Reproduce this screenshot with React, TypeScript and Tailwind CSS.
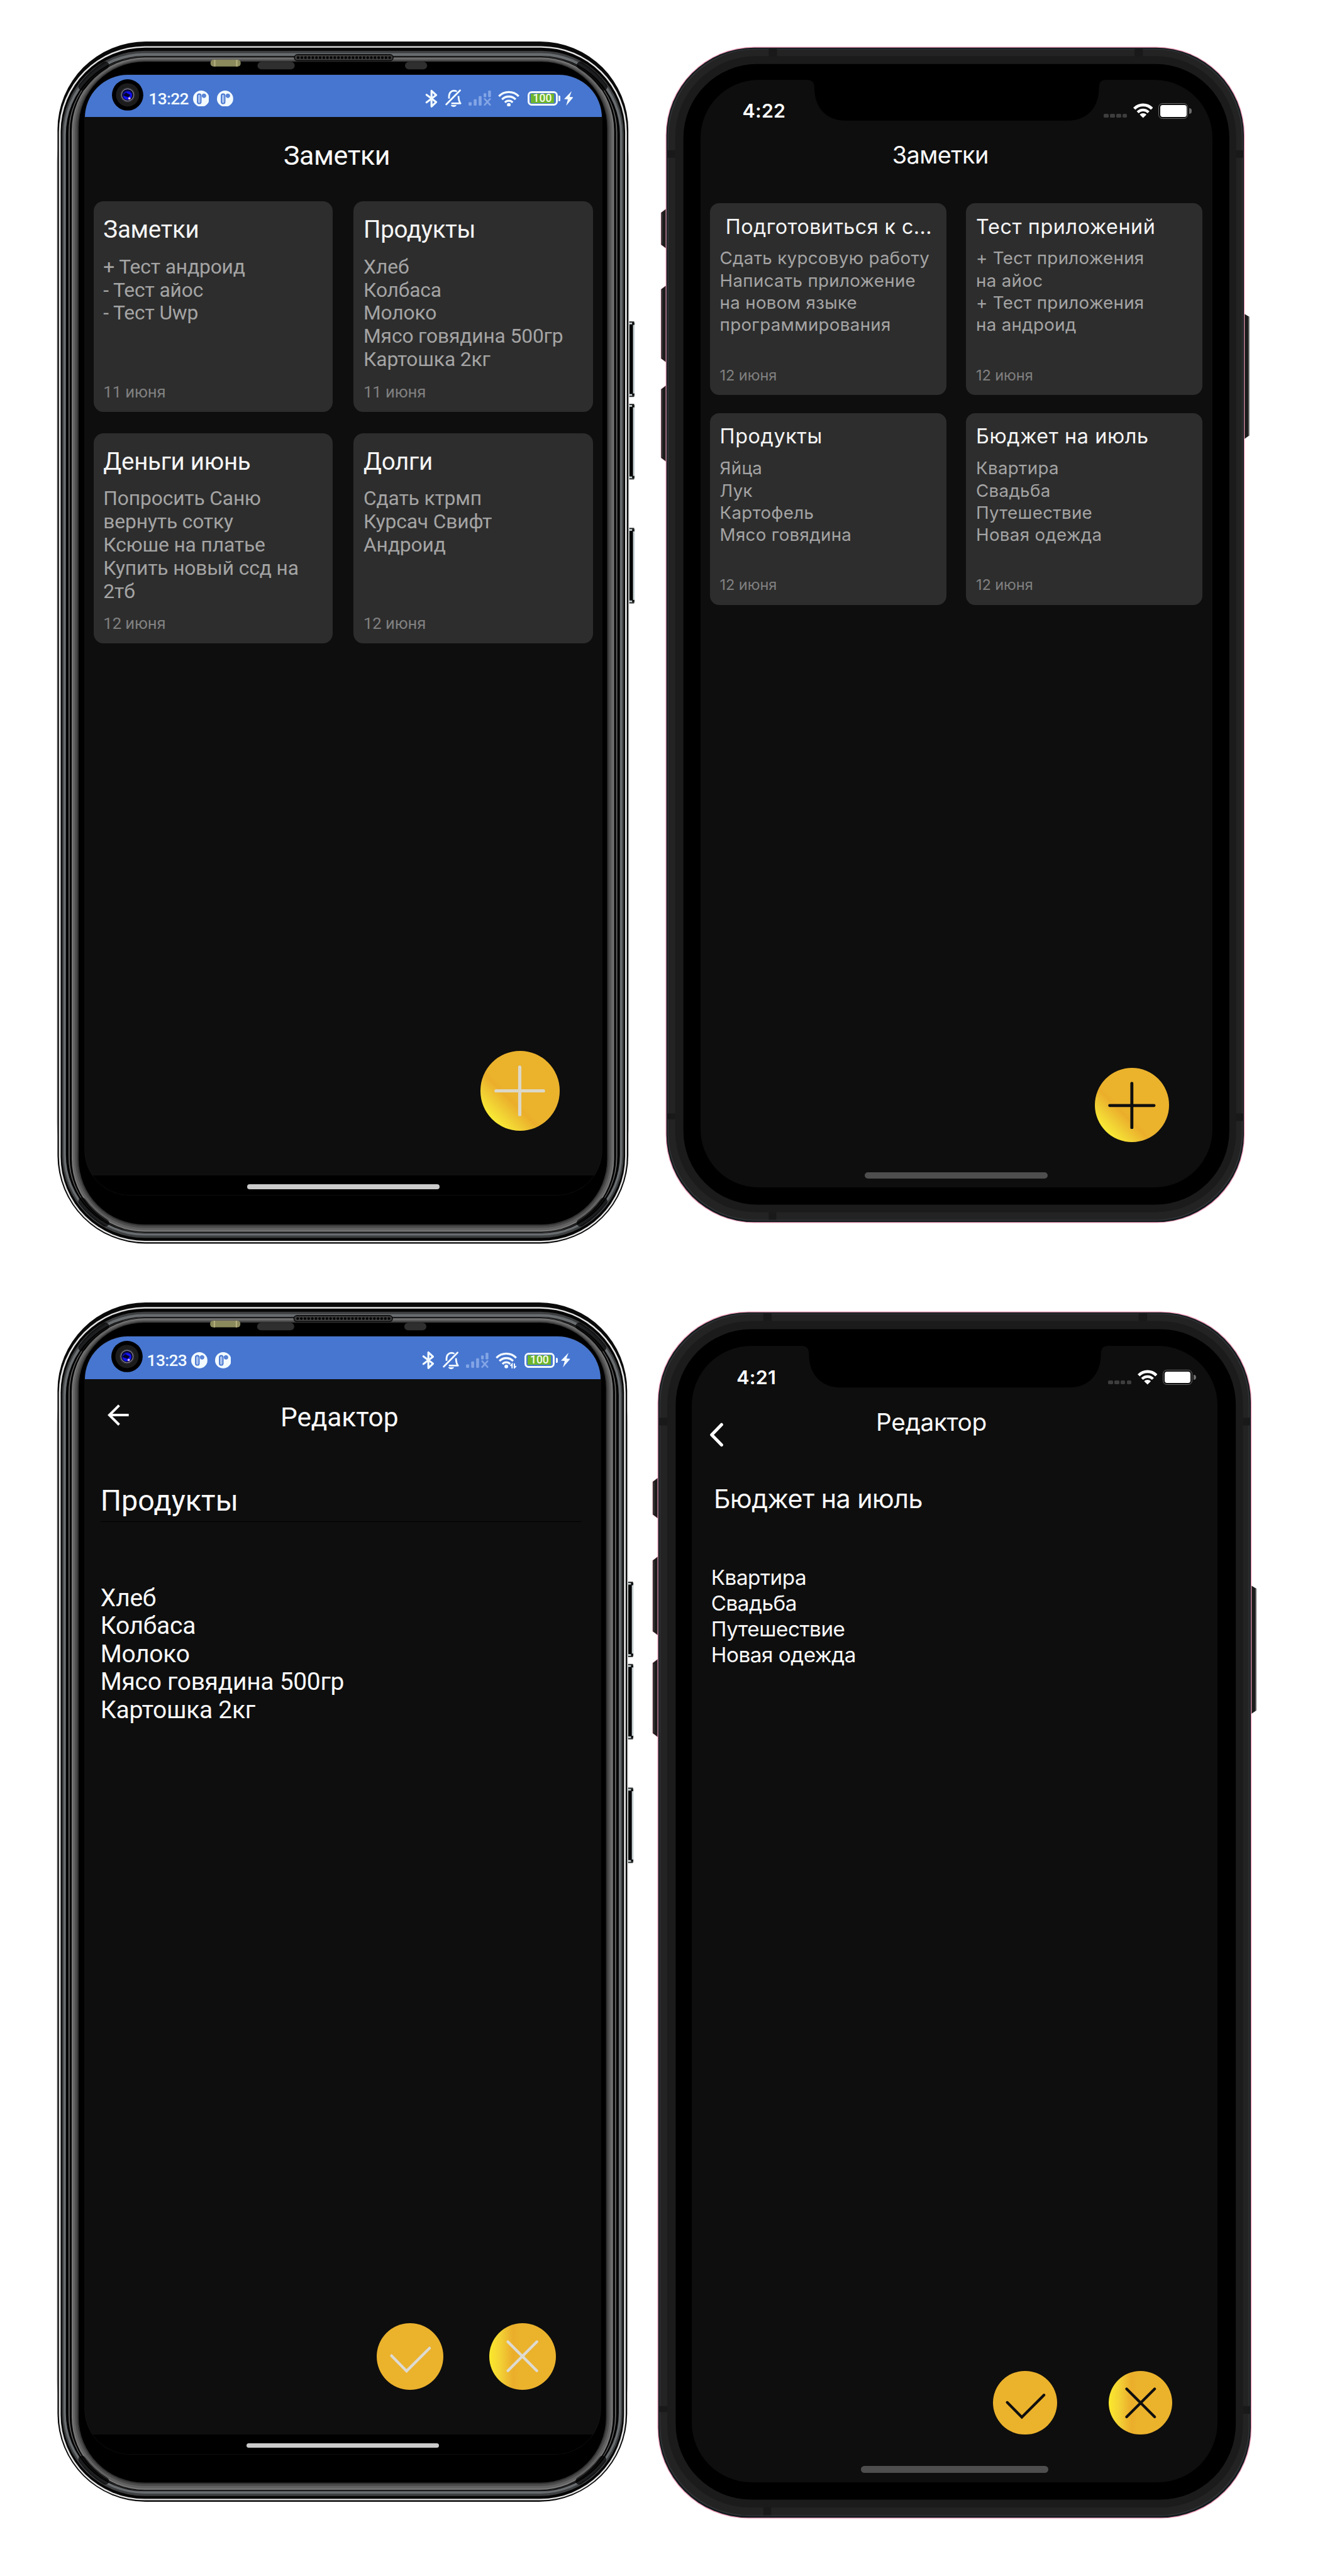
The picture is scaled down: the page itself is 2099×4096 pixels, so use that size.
import React from "react";

type Note = { title: string; lines: string[]; date: string; indent?: boolean };

const androidNotes: Note[] = [
  { title: "Заметки", lines: ["+ Тест андроид", "- Тест айос", "- Тест Uwp"], date: "11 июня" },
  { title: "Продукты", lines: ["Хлеб", "Колбаса", "Молоко", "Мясо говядина 500гр", "Картошка 2кг"], date: "11 июня" },
  { title: "Деньги июнь", lines: ["Попросить Саню", "вернуть сотку", "Ксюше на платье", "Купить новый ссд на", "2тб"], date: "12 июня" },
  { title: "Долги", lines: ["Сдать ктрмп", "Курсач Свифт", "Андроид"], date: "12 июня" },
];

const iosNotes: Note[] = [
  { title: "Подготовиться к с...", lines: ["Сдать курсовую работу", "Написать приложение", "на новом языке", "программирования"], date: "12 июня", indent: true },
  { title: "Тест приложений", lines: ["+ Тест приложения", "на айос", "+ Тест приложения", "на андроид"], date: "12 июня" },
  { title: "Продукты", lines: ["Яйца", "Лук", "Картофель", "Мясо говядина"], date: "12 июня" },
  { title: "Бюджет на июль", lines: ["Квартира", "Свадьба", "Путешествие", "Новая одежда"], date: "12 июня" },
];

/* ---------- device frames ---------- */

const androidLayers: [number, number, number, number, number, string][] = [
  [0, 60, 986, 2010, 150, "#d2d2d2"],
  [1.5, 0, 984.5, 2070, 152, "#0a0a0a"],
  [4, 8, 982, 2067.5, 148, "#e6e6e6"],
  [7, 10.5, 979, 2065, 145, "#050505"],
  [9.5, 16, 976.5, 2060, 142, "#3d3f40"],
  [12, 20, 974, 2056, 139, "#686c6f"],
  [16, 25, 970, 2052, 135, "#030303"],
  [20.5, 26, 965.5, 2051, 131, "#666666"],
  [22.5, 26.5, 963.5, 2050.5, 129, "#040404"],
  [26, 27.5, 960, 2049.5, 126, "#777777"],
  [28.5, 29.5, 957.5, 2047, 123, "#626262"],
  [32, 31.5, 954, 2043, 120, "#4c4c4c"],
  [35.5, 33.5, 950.5, 2039.5, 116, "#333333"],
  [38, 35, 948, 2037, 113, "#000000"],
];

function AndroidFrame() {
  const dots = Array.from({ length: 26 }, (_, i) => 415 + i * 6.3);
  return (
    <svg className="absolute inset-0 h-full w-full overflow-visible" viewBox="0 0 986 2070" preserveAspectRatio="none">
      {[482, 624, 837.5].map((y) => (
        <g key={y}>
          <rect x="984" y={y} width="11.5" height="130" rx="2.5" fill="#c9d3d5" />
          <rect x="986.5" y={y + 5} width="6" height="120" fill="#000" />
          <rect x="986" y={y} width="8.5" height="2" fill="#222" />
          <rect x="991" y={y + 2} width="4" height="4" fill="#111" />
          <rect x="986" y={y + 128} width="8.5" height="2" fill="#222" />
          <rect x="991" y={y + 124} width="4" height="4" fill="#111" />
        </g>
      ))}
      {androidLayers.map(([x1, y1, x2, y2, r, fill], i) => (
        <rect key={i} x={x1} y={y1} width={x2 - x1} height={y2 - y1} rx={r} fill={fill} />
      ))}
      {/* shaded corners of the metal rim */}
      <g fill="none" stroke="#000" strokeOpacity="0.72" strokeWidth="13" strokeLinecap="round">
        <path d="M44 78 A142 142 0 0 1 84 41" />
        <path d="M902 41 A142 142 0 0 1 942 78" />
        <path d="M44 1997 A142 142 0 0 0 84 2034" />
        <path d="M902 2034 A142 142 0 0 0 942 1997" />
      </g>
      <rect x="265" y="31.5" width="52" height="11.5" rx="5" fill="#8b8a5c" />
      <rect x="271" y="31.5" width="2.5" height="11.5" fill="#b3ad7c" />
      <rect x="309" y="31.5" width="2.5" height="11.5" fill="#b3ad7c" />
      <rect x="346" y="35" width="64" height="13" rx="6.5" fill="#2f2f2f" />
      <rect x="600" y="35" width="38" height="13" rx="6.5" fill="#2f2f2f" />
      <rect x="409.5" y="22.5" width="170" height="10.5" rx="5.2" fill="#3c3c3c" stroke="#050505" strokeWidth="1.5" />
      {dots.map((x) => (
        <circle key={x} cx={x + 1} cy="27.8" r="2.3" fill="#000" />
      ))}
    </svg>
  );
}

function IosFrame() {
  return (
    <svg className="absolute inset-0 h-full w-full overflow-visible" viewBox="0 0 996 2024" preserveAspectRatio="none">
      {[[278, 347], [410, 543], [582, 714]].map(([a, b]) => (
        <g key={a}>
          <path d={`M2 ${a - 1} L-8.5 ${a + 7} V${b - 7} L2 ${b + 1}Z`} fill="#1c1c1c" stroke="#e0708f" strokeOpacity="0.5" strokeWidth="1" />
          <path d={`M-6.5 ${a + 8} V${b - 8}`} stroke="#333" strokeWidth="2" />
        </g>
      ))}
      <path d="M994 458 L1004 464 V669 L994 676Z" fill="#1c1c1c" />
      <path d="M1003.5 464 V669" stroke="#5a5a5a" strokeWidth="2" />
      <rect x="-0.5" y="-0.5" width="997" height="2025" rx="152" fill="#f29ab5" />
      <rect x="0.8" y="0.8" width="994.4" height="2022.4" rx="151" fill="#101a1e" />
      <rect x="2.6" y="2.6" width="990.8" height="2018" rx="150" fill="#313334" />
      <rect x="4.5" y="4" width="987" height="2015" rx="149" fill="#232323" />
      <rect x="16" y="15.5" width="966" height="1990.5" rx="139" fill="#1b1b1b" />
      <g fill="#191919">
        <rect x="177" y="3" width="14" height="12.5" />
        <rect x="807" y="3" width="14" height="12.5" />
        <rect x="177" y="2006" width="13" height="13" />
        <rect x="3" y="177.5" width="13" height="13" />
        <rect x="982" y="177.5" width="11" height="13" />
        <rect x="3" y="1836" width="13" height="10" />
        <rect x="982" y="1836" width="11" height="13" />
      </g>
      <rect x="30" y="29" width="940" height="1964" rx="127" fill="#000" />
    </svg>
  );
}

function Notch() {
  return (
    <svg className="h-[70px] w-[516px] shrink-0" viewBox="0 0 516 70" preserveAspectRatio="none">
      <path d="M0 0 C9 0 13 4 13 14 C13 48 34 70 66 70 H450 C482 70 503 48 503 14 C503 4 507 0 516 0Z" fill="#000" />
    </svg>
  );
}

/* ---------- status bar pieces ---------- */

function Camera() {
  return (
    <svg className="mt-[8px] h-[54px] w-[54px] shrink-0 self-start" viewBox="0 0 54 54">
      <defs>
        <radialGradient id="lens" cx="0.55" cy="0.6" r="0.6">
          <stop offset="0" stopColor="#1414c8" />
          <stop offset="0.6" stopColor="#1212ff" />
          <stop offset="1" stopColor="#05051e" />
        </radialGradient>
      </defs>
      <circle cx="27" cy="27" r="27" fill="#000" />
      <circle cx="27" cy="27" r="20" fill="#1c1c1c" />
      <circle cx="27" cy="27" r="13" fill="#2a2a2e" />
      <circle cx="27" cy="27" r="10.5" fill="#050510" stroke="#77748a" strokeWidth="1.5" />
      <circle cx="26.5" cy="27" r="8.6" fill="url(#lens)" />
      <path d="M19 28 l5 -5 l8 4 l-4 4Z" fill="#03032a" />
      <circle cx="30" cy="33" r="2" fill="#d9b8ff" />
    </svg>
  );
}

function AppBadge() {
  return (
    <svg className="h-[28px] w-[28px] shrink-0" viewBox="0 0 28 28">
      <circle cx="14" cy="14" r="14" fill="#f2faff" />
      <rect x="7.6" y="6" width="6" height="16.4" rx="3" fill="#a9c2ee" stroke="#4776d0" strokeWidth="2" />
      <circle cx="18.8" cy="9" r="3.3" fill="#5b86d8" stroke="#4776d0" strokeWidth="1" />
    </svg>
  );
}

function AndroidStatus({ time, tall, traffic }: { time: string; tall?: boolean; traffic?: boolean }) {
  return (
    <div className={(tall ? "h-[74px] pr-[52px] pl-[46px]" : "h-[72px] pr-[49px] pl-[47px]") + " flex shrink-0 items-center bg-[#4776d0] text-[#f2faff]"}>
      <Camera />
      <div className={(tall ? "ml-[7px]" : "ml-[9px]") + " mt-[11px] w-[76px] text-[28.5px] leading-[34px] font-medium tracking-[-0.7px]"}>{time}</div>
      <div className={(tall ? "gap-[13px]" : "gap-[13.5px]") + " mt-[9px] flex"}>
        <AppBadge />
        <AppBadge />
      </div>
      <div className="mt-[9px] ml-auto flex items-center">
        <svg className="h-[32px] w-[22px]" viewBox="0 0 22 32" fill="none" stroke="currentColor" strokeWidth="3.4" strokeLinejoin="round" strokeLinecap="round">
          <path d="M2.5 9.5 L19 22 L11 29.5 V2.5 L19 10 L2.5 22.5" />
        </svg>
        <svg className="ml-[13px] h-[31px] w-[28px]" viewBox="0 0 28 31" fill="none" stroke="currentColor" strokeWidth="3">
          <path d="M1.8 26 L25.5 1.8" strokeLinecap="round" />
          <path d="M6.5 16 V12.5 C6.5 5.5 11 2.5 15 2.3 C17 2.3 18.5 2.6 20 3.8" />
          <path d="M22.8 11.5 C23 18 23.5 21 26.2 24.2 H10.5" strokeLinejoin="round" />
          <path d="M9.5 27.2 H19.5 C18.5 29.6 17 30.4 14.5 30.4 C12 30.4 10.5 29.6 9.5 27.2Z" fill="currentColor" stroke="none" />
        </svg>
        <svg className="ml-[12px] h-[26px] w-[39px]" viewBox="0 0 39 26" fill="#83a5e5">
          <rect x="0" y="20" width="5.5" height="6" rx="1.5" />
          <rect x="9" y="15" width="5" height="11" rx="1.5" />
          <rect x="17.5" y="9.5" width="5" height="16.5" rx="1.5" />
          <rect x="26" y="4.5" width="4.6" height="7" rx="1.5" />
          <rect x="33.8" y="0" width="4.8" height="11.5" rx="1.5" />
          <path d="M28 14.5 L37 24.5 M37 14.5 L28 24.5" stroke="#83a5e5" strokeWidth="3" strokeLinecap="round" />
        </svg>
        <svg className="ml-[12px] h-[28px] w-[37px]" viewBox="0 0 37 28" fill="none" stroke="currentColor" strokeWidth="3.6">
          <path d="M1.5 10 C10.5 0.2 26.5 0.2 35.5 10" />
          <path d="M6.8 15.4 C13 8.6 24 8.6 30.2 15.4" />
          <path d="M11.8 20.4 C15.3 16.4 21.7 16.4 25.2 20.4" />
          <circle cx="18.5" cy="24.6" r="3.2" fill="currentColor" stroke="none" />
          {traffic && <path d="M28.5 28 V20.5 L25.5 23.5 M32.5 19.5 V27 L35.5 24" strokeWidth="2.2" />}
        </svg>
        <div className="ml-[13px] flex h-[25.5px] w-[52px] items-center justify-center rounded-[7px] border-[3.5px] border-[#f2faff] p-[2px]">
          <div className="flex h-[16.5px] w-[40px] items-center justify-center bg-[#6db52c] text-[19px] leading-[16px] font-medium text-[#f4fbe8]">100</div>
        </div>
        <div className="ml-[2px] h-[9px] w-[3px] rounded-r-[2px] bg-[#f2faff]" />
        <svg className="ml-[6px] h-[25px] w-[16px]" viewBox="0 0 16 25" fill="currentColor">
          <path d="M13 0 L0 13.5 L6.5 14.2 L3.5 25 L16 10.5 L9.5 9.8Z" />
        </svg>
      </div>
    </div>
  );
}

function IosStatus({ time, large }: { time: string; large?: boolean }) {
  return (
    <div className={(large ? "pt-[34px] pr-[37.5px] pl-[77px]" : "pt-[33px] pr-[35.5px] pl-[72.5px]") + " flex shrink-0 items-center text-white"}>
      <div className="text-[33px] leading-[40px] font-semibold tracking-[0.2px]">{time}</div>
      <div className="ml-auto flex items-center">
        <div className="mt-[17px] flex gap-[2.7px]">
          {[0, 1, 2, 3].map((i) => (
            <div key={i} className="h-[7px] w-[8px] rounded-[2px] bg-[#3d3d3d]" />
          ))}
        </div>
        <svg className="ml-[10px] h-[26px] w-[34px]" viewBox="0 0 34 26" fill="none" stroke="#fff" strokeWidth="5">
          <path d="M1.8 9.6 C10 1 24 1 32.2 9.6" />
          <path d="M7.6 15.8 C13 10.4 21 10.4 26.4 15.8" strokeWidth="4.6" />
          <path d="M17 25.5 L11.2 19.8 C14.4 16.6 19.6 16.6 22.8 19.8Z" fill="#fff" stroke="none" />
        </svg>
        <div className="ml-[10px] flex h-[26.5px] w-[51px] rounded-[7px] border-2 border-[#6c6c6c] p-[2px]">
          <div className="flex-1 rounded-[4px] bg-white" />
        </div>
        <div className="ml-[2px] h-[9px] w-[4px] rounded-r-full bg-[#6c6c6c]" />
      </div>
    </div>
  );
}

/* ---------- round action buttons ---------- */

function AddButton({ className }: { className: string }) {
  return (
    <button className={className + " flex items-center justify-center rounded-full bg-[linear-gradient(45deg,#f9ec35_14%,#f0cb33_27%,#ebae2b_38%,#ebb22c_42%)]"}>
      <svg className="h-[64%] w-[64%]" viewBox="0 0 88 88" fill="none" stroke="currentColor" strokeWidth="5.6" strokeLinecap="round">
        <path d="M44 3 V85 M3 44 H85" />
      </svg>
    </button>
  );
}

function ConfirmButton({ className }: { className: string }) {
  return (
    <button className={className + " flex items-center justify-center rounded-full bg-[#ebb22c]"}>
      <svg className="h-full w-full" viewBox="0 0 114 114" fill="none" stroke="currentColor" strokeWidth="4.8" strokeLinecap="round">
        <path d="M25.5 56 L51.5 82.5 L91 43" />
      </svg>
    </button>
  );
}

function CancelButton({ className }: { className: string }) {
  return (
    <button className={className + " flex items-center justify-center rounded-full bg-[linear-gradient(90deg,#fbe92c_0%,#f3d135_17%,#ecb32d_32%,#ebae2b_36%,#ebb22c_45%)]"}>
      <svg className="h-full w-full" viewBox="0 0 114 114" fill="none" stroke="currentColor" strokeWidth="4.8" strokeLinecap="round">
        <path d="M32 32 L82 82 M82 32 L32 82" />
      </svg>
    </button>
  );
}

/* ---------- phones ---------- */

function AndroidNav() {
  return (
    <div className="flex h-[34px] shrink-0 justify-center bg-black pt-[15px]">
      <div className="h-[8.5px] w-[331px] rounded-full bg-[#cbcbcb]" />
    </div>
  );
}

function AndroidHome() {
  return (
    <section className="relative mt-[71px] ml-[97px] h-[2070px] w-[986px] font-[Roboto,sans-serif]">
      <AndroidFrame />
      <div className="relative mt-[58px] ml-[49px] flex h-[1929px] w-[890px] flex-col overflow-hidden rounded-t-[74px] rounded-b-[77px] bg-[#0e0e0e] shadow-[0_0_0_0.6px_#1a1a1a]">
        <AndroidStatus time="13:22" />
        <h1 className="mt-[39px] pr-[22px] text-center text-[46.5px] leading-[56px] tracking-[-0.4px] text-[#fafafa]">Заметки</h1>
        <div className="mt-[51px] grid grid-cols-2 gap-x-[36px] gap-y-[37px] px-[15px]">
          {androidNotes.map((n) => (
            <article key={n.title} className="flex h-[362px] flex-col rounded-[17px] bg-[#2d2d2d] pt-[25px] pb-[18px] pl-[17px] whitespace-nowrap">
              <h2 className="text-[41.7px] leading-[48px] tracking-[-0.3px] text-[#f5f5f5]">{n.title}</h2>
              <div className="mt-[20.5px] text-[34.4px] leading-[39.9px] tracking-[-0.15px] text-[#a4a4a4]">
                {n.lines.map((l) => (
                  <p key={l}>{l}</p>
                ))}
              </div>
              <div className="mt-auto text-[27.8px] leading-[32px] tracking-[-0.1px] text-[#808080]">{n.date}</div>
            </article>
          ))}
        </div>
        <div className="mt-auto flex justify-end pr-[72px] pb-[77px]">
          <AddButton className="h-[137px] w-[137px] text-[#dcd8c8]" />
        </div>
        <AndroidNav />
      </div>
    </section>
  );
}

function AndroidEditor() {
  return (
    <section className="relative mt-[42.7px] ml-[97px] h-[2065px] w-[984px] font-[Roboto,sans-serif]">
      <AndroidFrame />
      <div className="relative mt-[58px] ml-[49px] flex h-[1925px] w-[888px] flex-col overflow-hidden rounded-t-[74px] rounded-b-[77px] bg-[#0e0e0e] shadow-[0_0_0_0.6px_#1a1a1a]">
        <AndroidStatus time="13:23" tall traffic />
        <header className="mt-[37.5px] flex h-[56px] pr-[87px] pl-[39px]">
          <svg className="mt-[6px] h-[37px] w-[37px]" viewBox="0 0 37 37" fill="none" stroke="#fafafa" strokeWidth="4.4">
            <path d="M36.5 18.5 H3.5 M20 1.8 L3.2 18.5 L20 35.2" />
          </svg>
          <h1 className="flex-1 text-center text-[46px] leading-[56px] tracking-[-0.15px] text-[#fafafa]">Редактор</h1>
        </header>
        <div className="mt-[86px] mr-[32px] ml-[27px] border-b-2 border-black pb-[5px] text-[50.6px] leading-[60px] tracking-[0.05px] text-[#fafafa]">Продукты</div>
        <div className="mt-[107.5px] ml-[27px] text-[42.2px] leading-[48.1px] tracking-[-0.3px] text-[#fafafa]">
          {androidNotes[1].lines.map((l) => (
            <p key={l}>{l}</p>
          ))}
        </div>
        <div className="mt-auto flex justify-end gap-[80px] pr-[77px] pb-[77px]">
          <ConfirmButton className="h-[114px] w-[114px] text-[#dedbd2]" />
          <CancelButton className="h-[114px] w-[114px] text-[#dedbd2]" />
        </div>
        <AndroidNav />
      </div>
    </section>
  );
}

function IosHome() {
  return (
    <section className="relative mt-[81px] ml-[64px] h-[2024px] w-[996px] font-[Inter,sans-serif]">
      <IosFrame />
      <div className="relative mt-[57px] ml-[59px] flex h-[1907px] w-[881.5px] flex-col overflow-hidden rounded-[100px] bg-[#0e0e0e]">
        <div className="absolute top-0 left-[183px]">
          <Notch />
        </div>
        <IosStatus time="4:22" />
        <h1 className="mt-[30px] pr-[55px] text-center text-[41px] leading-[50px] tracking-[-0.6px] text-[#fafafa]">Заметки</h1>
        <div className="mt-[59px] grid grid-cols-2 gap-x-[34px] gap-y-[31.5px] px-[16.5px]">
          {iosNotes.map((n) => (
            <article key={n.title} className="flex h-[330px] flex-col rounded-[16px] bg-[#2d2d2d] pt-[20px] pb-[19px] pl-[17px] whitespace-nowrap">
              <h2 className={(n.indent ? "pl-[10px] tracking-[0.45px] " : "tracking-[0.65px] ") + "text-[35px] leading-[42px] text-[#f5f5f5]"}>{n.title}</h2>
              <div className="mt-[14px] text-[30px] leading-[38.3px] tracking-[0.35px] text-[#a4a4a4]">
                {n.lines.map((l, i) => (
                  <p key={i}>{l}</p>
                ))}
              </div>
              <div className="mt-auto text-[25.5px] leading-[30px] tracking-[-0.1px] text-[#808080]">{n.date}</div>
            </article>
          ))}
        </div>
        <div className="mt-auto flex justify-end pr-[74.5px]">
          <AddButton className="h-[128px] w-[128px] text-[#0f0f0f]" />
        </div>
        <div className="mt-[51px] mb-[16px] h-[11px] w-[315px] self-center rounded-full bg-[#4e4e4e]" />
      </div>
    </section>
  );
}

function IosEditor() {
  return (
    <section className="relative mt-[58.6px] ml-[52px] h-[2077px] w-[1022px] font-[Inter,sans-serif]">
      <IosFrame />
      <div className="relative mt-[59px] ml-[58.5px] flex h-[1957px] w-[905.5px] flex-col overflow-hidden rounded-[103px] bg-[#0e0e0e]">
        <div className="absolute top-0 left-[188px] origin-top-left scale-[1.026]">
          <Notch />
        </div>
        <IosStatus time="4:21" large />
        <header className="mt-[32px] flex h-[68px] items-start pr-[135px] pl-[30px]">
          <svg className="mt-[26px] h-[42px] w-[24px]" viewBox="0 0 24 42" fill="none" stroke="#fff" strokeWidth="5.4" strokeLinecap="round" strokeLinejoin="round">
            <path d="M21 3.5 L4 21 L21 38.5" />
          </svg>
          <h1 className="flex-1 text-center text-[42px] leading-[50px] tracking-[-0.4px] text-[#fafafa]">Редактор</h1>
        </header>
        <div className="mt-[63px] pl-[37.5px] text-[44.6px] leading-[54px] tracking-[-0.55px] text-[#fafafa]">Бюджет на июль</div>
        <div className="mt-[86px] pl-[33px] text-[36px] leading-[44.4px] tracking-[-0.5px] text-[#fafafa]">
          {iosNotes[3].lines.map((l) => (
            <p key={l}>{l}</p>
          ))}
        </div>
        <div className="mt-auto flex justify-end gap-[89px] pr-[78px]">
          <ConfirmButton className="h-[110px] w-[110px] text-[#0f0f0f]" />
          <CancelButton className="h-[110px] w-[110px] text-[#0f0f0f]" />
        </div>
        <div className="mt-[54px] mb-[17px] h-[11.5px] w-[323px] self-center rounded-full bg-[#4e4e4e]" />
      </div>
    </section>
  );
}

export default function App() {
  return (
    <main className="h-[4096px] w-[2099px] overflow-hidden bg-white">
      <div className="h-[4436px] w-[2273px] [zoom:0.92345]">
        <div className="flex h-[2200px] items-start">
          <AndroidHome />
          <IosHome />
        </div>
        <div className="flex h-[2236px] items-start">
          <AndroidEditor />
          <IosEditor />
        </div>
      </div>
    </main>
  );
}
